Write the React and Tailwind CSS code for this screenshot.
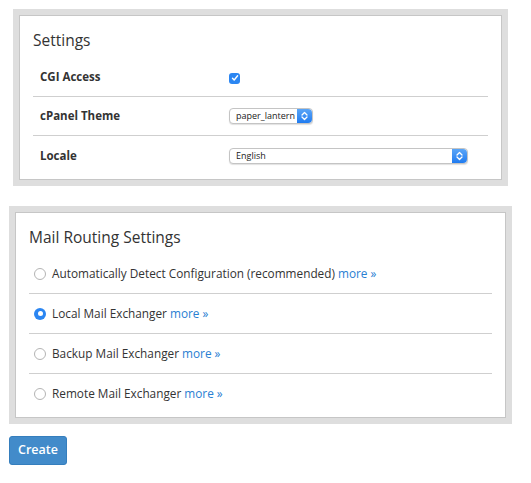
import { useState } from 'react'

const font = { fontFamily: '"Open Sans", "Noto Sans", sans-serif' }

function Stepper() {
  return (
    <div className="w-[15px] h-full bg-gradient-to-b from-[#5aa5f7] to-[#1e7bf0] rounded-r-[4px] flex items-center justify-center">
      <svg width="7" height="10" viewBox="0 0 7 10" fill="none" stroke="white" strokeWidth="1.3" strokeLinecap="round" strokeLinejoin="round">
        <path d="M1 4 L3.5 1.5 L6 4" />
        <path d="M1 6 L3.5 8.5 L6 6" />
      </svg>
    </div>
  )
}

function Select({ value, className }) {
  return (
    <div className={`h-[16px] flex items-stretch rounded-[4px] border border-[#c4c4c4] bg-white shadow-[0_1px_1px_rgba(0,0,0,0.12)] ${className}`}>
      <div className="flex-1 flex items-center pl-[6px] text-[9px] text-[#222] whitespace-nowrap overflow-hidden">{value}</div>
      <Stepper />
    </div>
  )
}

function Radio({ checked }) {
  if (checked) {
    return (
      <div className="w-[12px] h-[12px] rounded-full bg-[#2b86f2] flex items-center justify-center shrink-0">
        <div className="w-[5px] h-[5px] rounded-full bg-white" />
      </div>
    )
  }
  return <div className="w-[12px] h-[12px] rounded-full border border-[#b4b4b4] bg-white shrink-0" />
}

export default function App() {
  const [route, setRoute] = useState('local')

  const routes = [
    { id: 'auto', label: 'Automatically Detect Configuration (recommended)' },
    { id: 'local', label: 'Local Mail Exchanger' },
    { id: 'backup', label: 'Backup Mail Exchanger' },
    { id: 'remote', label: 'Remote Mail Exchanger' },
  ]

  return (
    <div className="w-[531px] h-[483px] bg-white text-[#333] pt-[9px]" style={font}>
      {/* Settings */}
      <div className="ml-[13px] w-[495px] border-[6px] border-[#dedede]">
        <div className="border border-[#c6c6c6] bg-white px-[13px] pt-[12px] pb-[4px]">
          <h2 className="text-[15.5px] leading-[25px] text-[#333] mb-[5px]">Settings</h2>
          <div className="h-[39px] flex items-center border-b border-[#cfcfcf]">
            <div className="w-[196px] pl-[7px] text-[11.5px] font-bold">CGI Access</div>
            <div className="w-[11px] h-[11px] rounded-[3px] bg-[#2b86f2] flex items-center justify-center mt-[2px]">
              <svg width="8" height="8" viewBox="0 0 8 8" fill="none" stroke="white" strokeWidth="1.4" strokeLinecap="round" strokeLinejoin="round">
                <path d="M1.5 4.2 L3.2 6 L6.6 1.8" />
              </svg>
            </div>
          </div>
          <div className="h-[39px] flex items-center border-b border-[#cfcfcf]">
            <div className="w-[196px] pl-[7px] text-[11.5px] font-bold">cPanel Theme</div>
            <Select value="paper_lantern" className="w-[84px]" />
          </div>
          <div className="h-[39px] flex items-center">
            <div className="w-[196px] pl-[7px] text-[11.5px] font-bold">Locale</div>
            <Select value="English" className="w-[239px]" />
          </div>
        </div>
      </div>

      {/* Mail Routing */}
      <div className="ml-[9px] mt-[20px] w-[503px] border-[6px] border-[#dedede]">
        <div className="border border-[#c6c6c6] bg-white px-[13px] pt-[12px] pb-[3px]">
          <h2 className="text-[15.5px] leading-[25px] text-[#333] mb-[4px]">Mail Routing Settings</h2>
          {routes.map((r, i) => (
            <div
              key={r.id}
              onClick={() => setRoute(r.id)}
              className={`h-[40px] flex items-center pl-[5px] text-[11.8px] ${i < routes.length - 1 ? 'border-b border-[#cfcfcf]' : ''}`}
            >
              <Radio checked={route === r.id} />
              <span className="ml-[6px]">
                {r.label} <a className="text-[#2a80d2]">more »</a>
              </span>
            </div>
          ))}
        </div>
      </div>

      <button className="ml-[9px] mt-[12px] w-[58px] h-[29px] rounded-[3px] bg-[#428bca] border border-[#357ebd] text-white text-[12.5px] font-semibold">
        Create
      </button>
    </div>
  )
}
